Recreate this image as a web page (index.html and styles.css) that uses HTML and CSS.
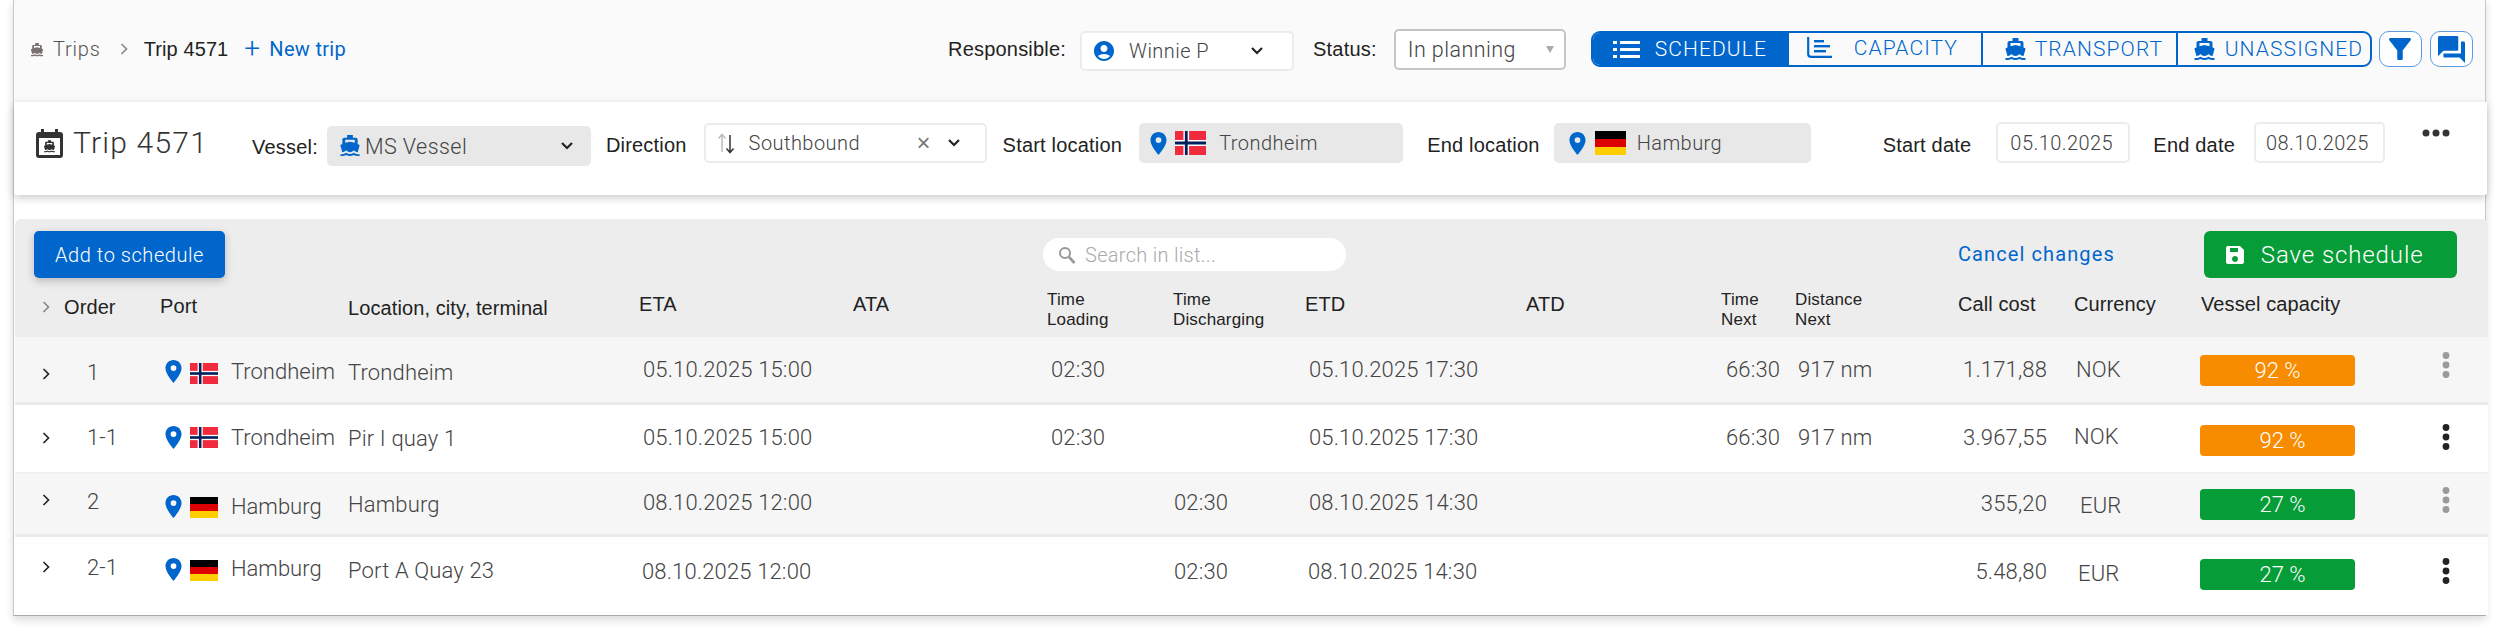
FILE: index.html
```html
<!DOCTYPE html>
<html lang="en">
<head>
<meta charset="utf-8">
<title>Trip 4571</title>
<link rel="stylesheet" href="styles.css">
</head>
<body>
<svg class="defs" width="0" height="0" aria-hidden="true">
  <symbol id="ship" viewBox="2 1 20 23"><path d="M20 21c-1.39 0-2.78-.47-4-1.32-2.44 1.71-5.56 1.71-8 0C6.78 20.53 5.39 21 4 21H2v2h2c1.38 0 2.74-.35 4-.99 2.52 1.29 5.48 1.29 8 0 1.26.65 2.62.99 4 .99h2v-2h-2zM3.95 19H4c1.6 0 3.02-.88 4-2 .98 1.12 2.4 2 4 2s3.02-.88 4-2c.98 1.12 2.4 2 4 2h.05l1.89-6.68c.08-.26.06-.54-.06-.78s-.34-.42-.6-.5L20 10.62V6c0-1.1-.9-2-2-2h-3V1H9v3H6c-1.1 0-2 .9-2 2v4.62l-1.29.42c-.26.08-.48.26-.6.5s-.15.52-.06.78L3.95 19zM7 6h10v3.2L12 8 7 9.2V6z"/></symbol>
  <symbol id="pin" viewBox="5 2 14 20"><path d="M12 2C8.13 2 5 5.13 5 9c0 5.25 7 13 7 13s7-7.75 7-13c0-3.87-3.13-7-7-7zm0 9.5a2.5 2.5 0 0 1 0-5 2.5 2.5 0 0 1 0 5z"/></symbol>
  <symbol id="chev" viewBox="0 0 12 16"><path d="M3 2l6 6-6 6" fill="none" stroke="currentColor" stroke-width="2"/></symbol>
  <symbol id="down" viewBox="0 0 14 10"><path d="M2 2l5 5 5-5" fill="none" stroke="currentColor" stroke-width="2.2"/></symbol>
  <symbol id="no" viewBox="0 0 22 16" preserveAspectRatio="none"><rect width="22" height="16" fill="#ef2b3d"/><rect x="6" width="4" height="16" fill="#fff"/><rect y="6" width="22" height="4" fill="#fff"/><rect x="7" width="2" height="16" fill="#00205b"/><rect y="7" width="22" height="2" fill="#00205b"/></symbol>
  <symbol id="de" viewBox="0 0 3 3" preserveAspectRatio="none"><rect width="3" height="1" fill="#000"/><rect y="1" width="3" height="1" fill="#dd0000"/><rect y="2" width="3" height="1" fill="#ffce00"/></symbol>
  <symbol id="dots" viewBox="0 0 8 26"><circle cx="4" cy="3.5" r="3.4"/><circle cx="4" cy="13" r="3.4"/><circle cx="4" cy="22.5" r="3.4"/></symbol>
</svg>

<div class="shell">
  <header class="topbar">
    <nav class="crumbs">
      <svg class="crumb-ship"><use href="#ship"/></svg>
      <span class="crumb-trips">Trips</span>
      <svg class="crumb-chev"><use href="#chev"/></svg>
      <span class="crumb-current">Trip 4571</span>
      <a class="new-trip"><span class="plus">+</span>New trip</a>
    </nav>
    <div class="top-tools">
      <span class="lbl lbl-resp">Responsible:</span>
      <div class="resp-select">
        <svg class="person" viewBox="2 2 20 20"><path d="M12 2C6.48 2 2 6.48 2 12s4.48 10 10 10 10-4.48 10-10S17.52 2 12 2zm0 4c1.93 0 3.5 1.57 3.5 3.5S13.93 13 12 13s-3.5-1.57-3.5-3.5S10.07 6 12 6zm0 14c-2.03 0-4.43-.82-6.14-2.88C7.55 15.8 9.68 15 12 15s4.45.8 6.14 2.12C16.43 19.18 14.03 20 12 20z"/></svg>
        <span class="val">Winnie P</span>
        <svg class="down"><use href="#down"/></svg>
      </div>
      <span class="lbl lbl-status">Status:</span>
      <div class="status-select"><span class="val">In planning</span><span class="tri"></span></div>
      <div class="segments">
        <a class="seg seg-schedule is-active">
          <svg class="seg-list" viewBox="0 0 27 20"><g fill="#fff"><rect x="0" y="2" width="4" height="3"/><rect x="7" y="2" width="20" height="3"/><rect x="0" y="9" width="4" height="3"/><rect x="7" y="9" width="20" height="3"/><rect x="0" y="16" width="4" height="3"/><rect x="7" y="16" width="20" height="3"/></g></svg>
          SCHEDULE</a>
        <a class="seg seg-capacity">
          <svg class="seg-cap" viewBox="0 0 25 21"><path d="M1.2 0v17a2.8 2.8 0 0 0 2.8 2.8h21" fill="none" stroke="#0066cc" stroke-width="2.2"/><g fill="#0066cc"><rect x="7" y="3" width="10" height="2.4"/><rect x="7" y="8" width="16" height="2.4"/><rect x="7" y="13" width="12" height="2.4"/></g></svg>
          CAPACITY</a>
        <a class="seg seg-transport"><svg class="seg-ship"><use href="#ship"/></svg>TRANSPORT</a>
        <a class="seg seg-unassigned"><svg class="seg-ship"><use href="#ship"/></svg>UNASSIGNED</a>
      </div>
      <button class="icon-btn btn-filter"><svg viewBox="4 4 16 16"><path d="M4.25 5.61C6.27 8.2 10 13 10 13v6c0 .55.45 1 1 1h2c.55 0 1-.45 1-1v-6s3.72-4.8 5.74-7.39c.51-.66.04-1.61-.79-1.61H5.04c-.83 0-1.3.95-.79 1.61z"/></svg></button>
      <button class="icon-btn btn-chat"><svg viewBox="2 2 20 20"><path d="M21 6h-2v9H6v2c0 .55.45 1 1 1h11l4 4V7c0-.55-.45-1-1-1zm-4 6V3c0-.55-.45-1-1-1H3c-.55 0-1 .45-1 1v14l4-4h10c.55 0 1-.45 1-1z"/></svg></button>
    </div>
  </header>

  <section class="trip-card">
    <svg class="cal" viewBox="0 0 27 29"><path fill="#333" d="M5 0h3v3h11V0h3v3h2a3 3 0 0 1 3 3v20a3 3 0 0 1-3 3H3a3 3 0 0 1-3-3V6a3 3 0 0 1 3-3h2z"/><rect x="3" y="9" width="21" height="17" fill="#fff"/><svg x="8" y="11" width="11" height="13" fill="#333"><use href="#ship"/></svg></svg>
    <h1 class="trip-title">Trip 4571</h1>
    <span class="lbl lbl-vessel">Vessel:</span>
    <div class="field vessel-field">
      <svg class="vessel-ship"><use href="#ship"/></svg>
      <span class="val">MS Vessel</span>
      <svg class="down"><use href="#down"/></svg>
    </div>
    <span class="lbl lbl-direction">Direction</span>
    <div class="field dir-field">
      <svg class="arrows" viewBox="0 0 18 22"><path d="M5 20V3M1.5 6.5L5 2.500l3.500 4" fill="none" stroke="#bbb" stroke-width="1.500"/><path d="M13 3v17M9.500 16.500l3.500 4 3.500-4" fill="none" stroke="#333" stroke-width="1.500"/></svg>
      <span class="val">Southbound</span>
      <span class="clear">×</span>
      <svg class="down"><use href="#down"/></svg>
    </div>
    <span class="lbl lbl-start">Start location</span>
    <div class="field loc-field start-field">
      <svg class="pin"><use href="#pin"/></svg><svg class="flag-lg"><use href="#no"/></svg><span class="val">Trondheim</span>
    </div>
    <span class="lbl lbl-end">End location</span>
    <div class="field loc-field end-field">
      <svg class="pin"><use href="#pin"/></svg><svg class="flag-lg"><use href="#de"/></svg><span class="val">Hamburg</span>
    </div>
    <span class="lbl lbl-sdate">Start date</span>
    <div class="date-input date-start"><span class="val">05.10.2025</span></div>
    <span class="lbl lbl-edate">End date</span>
    <div class="date-input date-end"><span class="val">08.10.2025</span></div>
    <svg class="more" viewBox="0 0 28 10"><circle cx="4" cy="5" r="3.500"/><circle cx="14" cy="5" r="3.500"/><circle cx="24" cy="5" r="3.500"/></svg>
  </section>

  <section class="panel">
    <div class="panel-head">
      <div class="toolbar">
        <button class="btn-add">Add to schedule</button>
        <div class="search">
          <svg class="search-ico" viewBox="0 0 18 18"><circle cx="7" cy="7" r="5" fill="none" stroke="#999" stroke-width="2"/><path d="M11 11l5.500 6" stroke="#999" stroke-width="2.600"/></svg>
          <span>Search in list...</span>
        </div>
        <a class="cancel">Cancel changes</a>
        <button class="btn-save">
          <svg class="save-ico" viewBox="3 3 18 18"><path d="M17 3H5c-1.110 0-2 .9-2 2v14c0 1.100.89 2 2 2h14c1.100 0 2-.9 2-2V7l-4-4zm-5 16c-1.660 0-3-1.340-3-3s1.340-3 3-3 3 1.340 3 3-1.340 3-3 3zm3-10H7V5h8v4z"/></svg>
          Save schedule
        </button>
      </div>
      <div class="grid head-row">
        <svg class="h-chev"><use href="#chev"/></svg>
        <span class="h h-order">Order</span>
        <span class="h h-port">Port</span>
        <span class="h h-loc">Location, city, terminal</span>
        <span class="h">ETA</span>
        <span class="h">ATA</span>
        <span class="h2">Time<br>Loading</span>
        <span class="h2">Time<br>Discharging</span>
        <span class="h">ETD</span>
        <span class="h">ATD</span>
        <span class="h2">Time<br>Next</span>
        <span class="h2">Distance<br>Next</span>
        <span class="h">Call cost</span>
        <span class="h">Currency</span>
        <span class="h">Vessel capacity</span>
      </div>
    </div>

    <div class="grid row row-1">
      <svg class="r-chev"><use href="#chev"/></svg>
      <span class="t r-order">1</span>
      <div class="r-port"><svg class="r-pin"><use href="#pin"/></svg><svg class="r-flag"><use href="#no"/></svg><span class="t r-pname">Trondheim</span></div>
      <span class="t r-loc">Trondheim</span>
      <span class="t r-date">05.10.2025 15:00</span>
      <span></span>
      <span class="t r-date r-load">02:30</span>
      <span></span>
      <span class="t r-date r-etd">05.10.2025 17:30</span>
      <span></span>
      <span class="t r-date r-next">66:30</span>
      <span class="t r-date r-dist">917 nm</span>
      <span class="t r-cost">1.171,88</span>
      <span class="t r-cur">NOK</span>
      <span class="bar bar-orange">92 %</span>
      <svg class="r-dots muted"><use href="#dots"/></svg>
    </div>

    <div class="grid row row-2">
      <svg class="r-chev"><use href="#chev"/></svg>
      <span class="t r-order">1-1</span>
      <div class="r-port"><svg class="r-pin"><use href="#pin"/></svg><svg class="r-flag"><use href="#no"/></svg><span class="t r-pname">Trondheim</span></div>
      <span class="t r-loc">Pir I quay 1</span>
      <span class="t r-date">05.10.2025 15:00</span>
      <span></span>
      <span class="t r-date r-load">02:30</span>
      <span></span>
      <span class="t r-date r-etd">05.10.2025 17:30</span>
      <span></span>
      <span class="t r-date r-next">66:30</span>
      <span class="t r-date r-dist">917 nm</span>
      <span class="t r-cost">3.967,55</span>
      <span class="t r-cur">NOK</span>
      <span class="bar bar-orange bar-shift">92 %</span>
      <svg class="r-dots"><use href="#dots"/></svg>
    </div>

    <div class="grid row row-3">
      <svg class="r-chev"><use href="#chev"/></svg>
      <span class="t r-order">2</span>
      <div class="r-port"><svg class="r-pin"><use href="#pin"/></svg><svg class="r-flag"><use href="#de"/></svg><span class="t r-pname">Hamburg</span></div>
      <span class="t r-loc">Hamburg</span>
      <span class="t r-date">08.10.2025 12:00</span>
      <span></span>
      <span></span>
      <span class="t r-date r-disch">02:30</span>
      <span class="t r-date r-etd">08.10.2025 14:30</span>
      <span></span>
      <span></span>
      <span></span>
      <span class="t r-cost">355,20</span>
      <span class="t r-cur">EUR</span>
      <span class="bar bar-green bar-shift">27 %</span>
      <svg class="r-dots muted"><use href="#dots"/></svg>
    </div>

    <div class="grid row row-4">
      <svg class="r-chev"><use href="#chev"/></svg>
      <span class="t r-order">2-1</span>
      <div class="r-port"><svg class="r-pin"><use href="#pin"/></svg><svg class="r-flag"><use href="#de"/></svg><span class="t r-pname">Hamburg</span></div>
      <span class="t r-loc">Port A Quay 23</span>
      <span class="t r-date">08.10.2025 12:00</span>
      <span></span>
      <span></span>
      <span class="t r-date r-disch">02:30</span>
      <span class="t r-date r-etd">08.10.2025 14:30</span>
      <span></span>
      <span></span>
      <span></span>
      <span class="t r-cost">5.48,80</span>
      <span class="t r-cur">EUR</span>
      <span class="bar bar-green bar-shift">27 %</span>
      <svg class="r-dots"><use href="#dots"/></svg>
    </div>
  </section>
</div>
</body>
</html>
```

FILE: styles.css
```css
* { box-sizing: border-box; }
html, body { margin: 0; padding: 0; background: #fff; overflow: hidden; }
body { width: 2500px; height: 631px; font-family: "Liberation Sans", Arial, sans-serif; font-size: 20px; color: #222; }
.defs { position: absolute; }
svg { display: block; flex: none; }
button { font: inherit; margin: 0; cursor: pointer; }
a { cursor: pointer; }

.shell { margin-left: 13px; width: 2473px; height: 616px; border-left: 1px solid #c8c8c8; border-right: 1px solid #c8c8c8; border-bottom: 1px solid #aaa; box-shadow: 0 4px 8px rgba(0,0,0,.14); }

.val, .t { font-family: Roboto, "Liberation Sans", sans-serif; font-weight: 300; color: #444; letter-spacing: .45px; }
.lbl { line-height: 24px; white-space: nowrap; letter-spacing: .2px; }

/* top bar */
.topbar { height: 102px; background: #fafafa; display: flex; padding-top: 29px; }
.crumbs { display: flex; align-items: center; height: 40px; margin-left: 17px; }
.crumb-ship { width: 12px; height: 14px; fill: #7a7070; margin-top: 2px; }
.crumb-trips { margin-left: 10px; color: #555; font-family: Roboto, sans-serif; font-weight: 300; letter-spacing: .8px; }
.crumb-chev { width: 10px; height: 16px; color: #888; margin-left: 18px; }
.crumb-current { margin-left: 15px; letter-spacing: .1px; }
.new-trip { margin-left: 16px; color: #0066cc; display: flex; align-items: center; font-family: Roboto, sans-serif; letter-spacing: .3px; }
.plus { font-size: 28px; font-weight: 300; width: 25px; line-height: 24px; }

.top-tools { display: flex; align-items: flex-start; margin-left: 602px; }
.lbl-resp { margin-top: 8px; }
.resp-select { margin-left: 14px; width: 214px; height: 40px; margin-top: 2px; background: #fff; border: 2px solid #ececec; border-radius: 5px; display: flex; align-items: center; padding-left: 12px; }
.person { width: 20px; height: 20px; fill: #0066cc; }
.resp-select .val { margin-left: 15px; }
.resp-select .down { margin-left: 41px; }
.down { width: 14px; height: 10px; color: #222; }
.lbl-status { margin-left: 19px; margin-top: 8px; }
.status-select { margin-left: 17px; width: 172px; height: 41px; background: #fff; border: 2px solid #c4c4c4; border-radius: 5px; display: flex; align-items: center; padding-left: 12px; }
.status-select .val { flex: 1; font-size: 21.5px; }
.tri { width: 0; height: 0; border-left: 4px solid transparent; border-right: 4px solid transparent; border-top: 7px solid #aaa; margin-right: 10px; }

.segments { margin-left: 25px; margin-top: 2px; width: 781px; height: 36px; display: flex; border: 2px solid #0066cc; border-radius: 9px; overflow: hidden; }
.seg { display: flex; align-items: center; color: #0066cc; font-family: Roboto, sans-serif; font-weight: 300; font-size: 21px; letter-spacing: 1.1px; border-right: 2px solid #0066cc; white-space: nowrap; }
.seg:last-child { border-right: 0; }
.seg-schedule { width: 196px; padding-left: 20px; }
.seg-schedule.is-active { background: #0066cc; color: #fff; }
.seg-list { width: 27px; height: 20px; margin-right: 15px; }
.seg-capacity { width: 194px; padding-left: 18px; padding-bottom: 3px; }
.seg-cap { width: 25px; height: 21px; margin-right: 22px; }
.seg-transport { width: 195px; padding-left: 22px; }
.seg-unassigned { flex: 1; padding-left: 16px; }
.seg-ship { width: 21px; height: 23px; fill: #0066cc; margin-right: 9px; }
.seg-unassigned .seg-ship { margin-right: 10px; }

.icon-btn { width: 43px; height: 36px; margin-top: 2px; background: #fff; border: 1px solid #5b9be0; border-radius: 10px; display: flex; align-items: center; justify-content: center; padding: 0; fill: #0066cc; }
.btn-filter { margin-left: 7px; }
.btn-chat { margin-left: 8px; }
.btn-filter svg { width: 22px; height: 26px; }
.btn-chat svg { width: 27px; height: 27px; }

/* trip card */
.trip-card { position: relative; height: 93px; width: 2473px; background: #fff; display: flex; align-items: flex-start; padding-top: 21px; border-radius: 0 0 3px 3px; box-shadow: 0 3px 8px rgba(0,0,0,.2); z-index: 1; }
.cal { width: 27px; height: 29px; margin-left: 22px; margin-top: 6px; }
.trip-title { margin: 2px 0 0 10px; font-family: Roboto, sans-serif; font-weight: 300; font-size: 30px; line-height: 36px; letter-spacing: 1.2px; color: #333; white-space: nowrap; width: 179px; }
.lbl-vessel { margin-left: 0; margin-top: 12px; }
.field { display: flex; align-items: center; height: 40px; border-radius: 5px; background: #e8e8e8; }
.vessel-field { width: 264px; margin-left: 9px; margin-top: 3px; padding-left: 13px; }
.vessel-ship { width: 20px; height: 22px; fill: #0066cc; }
.vessel-field .val { margin-left: 5px; width: 195px; font-size: 21.5px; }
.lbl-direction { margin-left: 15px; margin-top: 10px; }
.dir-field { width: 283px; margin-left: 17px; background: #fff; border: 2px solid #ececec; padding-left: 11px; }
.arrows { width: 18px; height: 22px; }
.dir-field .val { margin-left: 14px; width: 168px; }
.clear { font-family: "Liberation Sans", sans-serif; color: #777; font-size: 24px; line-height: 24px; width: 30px; }
.lbl-start { margin-left: 16px; margin-top: 10px; }
.loc-field .val { margin-left: 13px; }
.start-field { width: 264px; margin-left: 17px; padding-left: 10px; }
.pin { width: 19px; height: 23px; fill: #0066cc; }
.flag-lg { width: 31px; height: 24px; margin-left: 7px; }
.lbl-end { margin-left: 24px; margin-top: 10px; }
.end-field { width: 257px; margin-left: 14px; padding-left: 14px; }
.end-field .flag-lg { margin-left: 8px; }
.end-field .val { margin-left: 11px; }
.lbl-sdate { margin-left: 72px; margin-top: 10px; }
.date-input { height: 41px; border: 2px solid #ececec; border-radius: 5px; display: flex; align-items: center; background: #fff; margin-top: -1px; }
.date-start { width: 134px; margin-left: 25px; padding-left: 12px; }
.lbl-edate { margin-left: 23px; margin-top: 10px; }
.date-end { width: 131px; margin-left: 19px; padding-left: 10px; }
.more { width: 28px; height: 10px; margin-left: 37px; margin-top: 5px; fill: #333; }

/* panel */
.panel { width: 2473px; margin-left: 1px; margin-top: 24px; }
.panel-head { height: 118px; background: #ededed; border-radius: 6px 6px 0 0; }
.toolbar { display: flex; align-items: flex-start; padding-top: 12px; height: 69px; }
.btn-add { margin-left: 19px; width: 191px; height: 47px; background: #0066cc; color: #fff; border: 0; border-radius: 5px; box-shadow: 0 3px 8px rgba(0,0,0,.22); font-family: Roboto, sans-serif; font-weight: 300; letter-spacing: .55px; padding: 0; }
.search { margin-left: 818px; margin-top: 7px; width: 303px; height: 33px; background: #fff; border-radius: 17px; display: flex; align-items: center; padding-left: 15px; color: #aaa; font-family: Roboto, sans-serif; font-weight: 300; font-size: 20px; letter-spacing: .3px; }
.search-ico { width: 18px; height: 18px; margin-right: 9px; }
.cancel { margin-left: 612px; margin-top: 11px; line-height: 24px; color: #0066cc; font-family: Roboto, sans-serif; letter-spacing: 1.1px; white-space: nowrap; }
.btn-save { margin-left: 89px; width: 253px; height: 47px; background: #069c38; color: #fff; border: 0; border-radius: 6px; display: flex; align-items: center; padding: 0 0 0 22px; font-family: Roboto, sans-serif; font-weight: 300; font-size: 24px; letter-spacing: .9px; white-space: nowrap; }
.save-ico { width: 18px; height: 18px; fill: #fff; margin-right: 17px; }

.grid { display: grid; grid-template-columns: 24px 96px 188px 291px 214px 194px 126px 132px 221px 195px 74px 163px 116px 127px 229px 55px; padding-left: 25px; }
.grid > * { align-self: start; white-space: nowrap; }
.head-row { height: 49px; }
.h { font-size: 20px; line-height: 24px; margin-top: 4px; letter-spacing: .1px; }
.h2 { font-size: 17px; line-height: 20px; letter-spacing: .15px; margin-top: 2px; }
.h-chev { width: 10px; height: 16px; color: #888; margin-top: 11px; margin-left: 1px; }
.h-order { margin-top: 7px; }
.h-port { margin-top: 6px; }
.h-loc { margin-top: 8px; }

.row { background: #fff; }
.row-1 { height: 68px; background: #f6f6f6; border-bottom: 3px solid #ebebeb; --chev: 29px; --order: 24px; --pin: 23px; --flag: 26px; --pname: 23px; --loc: 24px; --date: 21px; --xdate: 4px; --cost: 21px; --cur: 21px; --xcur: 2px; --bar: 18px; --dots: 15px; }
.row-2 { height: 69px; border-bottom: 2px solid #f0f0f0; --chev: 25px; --order: 21px; --pin: 21px; --flag: 22px; --pname: 21px; --loc: 22px; --date: 21px; --xdate: 4px; --cost: 21px; --cur: 20px; --xcur: 0px; --bar: 20px; --dots: 19px; }
.row-3 { height: 63px; background: #f6f6f6; border-bottom: 3px solid #ebebeb; --chev: 18px; --order: 16px; --pin: 21px; --flag: 23px; --pname: 21px; --loc: 19px; --date: 17px; --xdate: 4px; --cost: 18px; --cur: 20px; --xcur: 6px; --bar: 15px; --dots: 13px; }
.row-4 { height: 78px; --chev: 22px; --order: 19px; --pin: 21px; --flag: 23px; --pname: 20px; --loc: 22px; --date: 23px; --xdate: 3px; --cost: 23px; --cur: 25px; --xcur: 4px; --bar: 22px; --dots: 21px; }

.t { line-height: 24px; font-size: 22px; letter-spacing: .15px; }
.r-chev { width: 10px; height: 16px; color: #222; margin-top: var(--chev); margin-left: 1px; }
.r-order { margin-top: var(--order); margin-left: 23px; }
.r-port { display: flex; align-items: flex-start; padding-left: 4px; }
.r-pin { width: 19px; height: 23px; fill: #0066cc; margin-top: var(--pin); }
.r-flag { width: 28px; height: 21px; margin-left: 7px; margin-top: var(--flag); }
.r-pname { margin-left: 13px; margin-top: var(--pname); letter-spacing: 0; }
.r-loc { margin-top: var(--loc); }
.r-date { margin-top: var(--date); margin-left: var(--xdate); }
.r-disch { margin-left: 1px; }
.r-next { margin-left: 5px; }
.r-dist { margin-left: 3px; }
.r-cost { margin-top: var(--cost); justify-self: end; margin-right: 27px; }
.r-cur { margin-top: var(--cur); margin-left: var(--xcur); }
.bar { width: 155px; height: 31px; margin-top: var(--bar); margin-left: -1px; border-radius: 4px; color: #fff; font-family: Roboto, sans-serif; font-weight: 300; font-size: 22px; line-height: 31px; text-align: center; }
.bar-shift { padding-left: 10px; }
.bar-orange { background: #f78c00; }
.bar-green { background: #069c38; }
.r-dots { width: 8px; height: 26px; margin-top: var(--dots); margin-left: 12px; fill: #222; }
.r-dots.muted { fill: #9a9a9a; }
```
